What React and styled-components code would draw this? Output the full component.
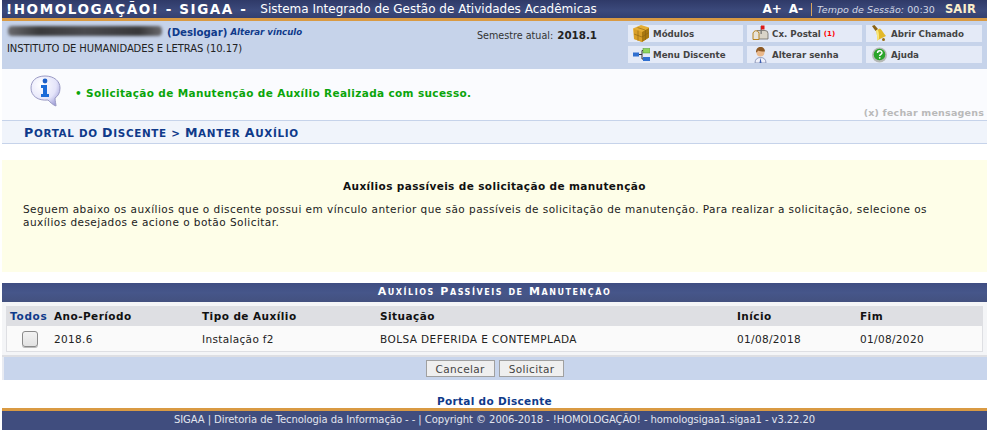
import React from "react";
import styled, { createGlobalStyle } from "styled-components";

const Global = createGlobalStyle`
  html, body { margin: 0; padding: 0; background: #fff; overflow: hidden; }
  body { font-family: "DejaVu Sans", Verdana, sans-serif; font-size: 11px; color: #222; }
`;
const Page = styled.div`
  width: 985px; height: 430px; margin-left: 2px; display: flex; flex-direction: column;
`;
const TopBar = styled.header`
  height: 18px; flex: none; display: flex; align-items: center; color: #fff;
  background: linear-gradient(#2f3a68, #3c4a7c 60%, #34406f);
  border-bottom: 3px solid #d99a43; padding-left: 4px;
`;
const SystemName = styled.strong`
  font-size: 13.5px; letter-spacing: 1.58px; font-weight: 700; white-space: nowrap;
`;
const SystemDesc = styled.span`
  margin-left: 13px; font-size: 12px; letter-spacing: 0; white-space: nowrap;
`;
const TopRight = styled.div`
  margin-left: auto; display: flex; align-items: center; height: 18px; white-space: nowrap;
`;
const FontSize = styled.b`
  font-size: 12px; color: #fff; margin-left: 7px;
`;
const Session = styled.span`
  font-size: 9.5px; color: #d4d8e4; border-left: 1px solid #d9a55c; margin-left: 8px; padding-left: 5px;
  line-height: 13px; letter-spacing: 0.06px;
  i { font-style: italic; }
`;
const Sair = styled.b`
  font-size: 11.5px; color: #fbeecb; margin-left: 10px; margin-right: 11px; letter-spacing: 0.2px;
`;
const InfoBar = styled.section`
  height: 48px; flex: none; background: #c6d3ea; display: flex; position: relative;
`;
const UserCol = styled.div`
  width: 475px; padding: 4px 0 0 5px; line-height: 15px; font-size: 10px; box-sizing: border-box;
`;
const UserLine = styled.div`
  height: 15px; display: flex; align-items: center; white-space: nowrap;
`;
const Blur = styled.span`
  display: block; width: 154px; height: 10px; margin: -3px 5px 0 1px; background: linear-gradient(90deg, #6a6a6e, #3a3a3c 20%, #4a4a4e 50%, #38383a 85%, #6a6a6e);
  filter: blur(1.8px); border-radius: 4px;
`;
const Logout = styled.b`
  color: #0f3a8a; font-size: 10.2px;
`;
const Vinculo = styled.i`
  color: #0f3a8a; font-weight: 700; font-size: 8.65px; margin-left: 3px;
`;
const Institute = styled.div`
  font-size: 10px; color: #222; letter-spacing: -0.1px; margin-top: 1px; white-space: nowrap;
`;
const Semester = styled.div`
  width: 151px; padding-top: 7px; font-size: 9.6px; color: #333; white-space: nowrap; line-height: 14px;
  b { font-size: 10.3px; color: #222; margin-left: 1px; }
`;
const MenuGrid = styled.nav`
  display: grid; grid-template-columns: 115px 115px 116px; grid-auto-rows: 17px; column-gap: 4px; row-gap: 4px; padding-top: 4px;
`;
const MenuItem = styled.div`
  background: #e4eaf7; display: flex; align-items: center; padding-left: 5px; overflow: hidden;
  font-size: 8.7px; font-weight: 700; color: #444; white-space: nowrap;
  svg { flex: none; width: 17px; height: 17px; margin-right: 3px; }
  sup { color: #f00; font-size: 7px; margin-left: 3px; vertical-align: baseline; }
`;
const Messages = styled.section`
  flex: none; background: #fafbfe; border-bottom: 1px solid #c6d3ea; position: relative; display: flex; align-items: flex-start;
  padding: 6px 0 0 28px; height: 45px;
`;
const MsgIcon = styled.svg`
  width: 32px; height: 32px; flex: none;
`;
const MsgText = styled.div`
  color: #0aa50a; font-weight: 700; font-size: 10.5px; letter-spacing: 0.35px; margin: 11px 0 0 13px;
  white-space: nowrap; line-height: 14px;
`;
const Close = styled.span`
  position: absolute; right: 3px; bottom: 2px; font-size: 9.5px; font-weight: 700; color: #b9b9b9; letter-spacing: 0.2px;
`;
const Title = styled.h2`
  margin: 0; height: 22px; flex: none; background: #f0f4fb; color: #0f3a8a; font-size: 10.4px; font-weight: 700;
  display: flex; align-items: center; padding-left: 22px; text-transform: uppercase; letter-spacing: 0.68px;
  white-space: pre; border-bottom: 1px solid #c6d3ea;
`;
const TitleCap = styled.span`
  font-size: 12.6px;
`;
const Notice = styled.section`
  margin-top: 16px; height: 112px; flex: none; background: #fefee8; box-sizing: border-box; padding: 19px 21px 0;
  font-size: 10.5px; line-height: 13px; color: #222;
  h3 { margin: 0 0 10px; text-align: center; font-size: 10.5px; font-weight: 700; color: #111; line-height: 14px; letter-spacing: 0.38px; }
  p { margin: 0; letter-spacing: 0.455px; }
`;
const Form = styled.section`
  margin-top: 11px; flex: none;
`;
const Caption = styled.div`
  height: 19px; background: linear-gradient(#3f4d82, #46568a 50%, #43517f); color: #fff; font-weight: 700; text-align: center;
  font-size: 11px; font-variant: small-caps; letter-spacing: 1.55px; line-height: 18px;
`;
const FormBody = styled.div`
  background: #f4f5f7; padding: 4px 4px 3px; border-bottom: 2px solid #dedfe3;
`;
const Table = styled.table`
  width: 100%; border-collapse: separate; border-spacing: 0; table-layout: fixed; font-size: 10.5px;
  border: 1px solid #dedfe3; border-top: none; background: #fafafa;
  th { background: #dedfe3; text-align: left; font-weight: 700; color: #111; height: 20px; padding: 0 0 0 1px; letter-spacing: 0.45px; }
  td { height: 25px; padding: 0 0 0 1px; color: #222; letter-spacing: 0.34px; white-space: nowrap; }
`;
const TodosHead = styled.th`
  && { color: #0f3a8a; padding-left: 3px; letter-spacing: 0.7px; }
`;
const WideCell = styled.td`
  && { letter-spacing: 0.43px; }
`;
const Box = styled.span`
  display: block; width: 14px; height: 14px; margin: 0 0 0 14px; border: 1px solid #8a8a8a; border-radius: 3px;
  background: linear-gradient(#f2f2f2, #e2e2e2); box-shadow: 0 1px 0 #bbb;
`;
const FormFoot = styled.div`
  height: 23px; background: #c8d5ec; display: flex; justify-content: center; align-items: center; gap: 4px;
  border-left: 2px solid #e8ebf2; padding-right: 1px;
`;
const Btn = styled.button`
  height: 17px; padding: 0 9px; font: 10.5px "DejaVu Sans", sans-serif; color: #444; background: #efefef;
  border: 1px solid #a0a0a0; letter-spacing: 0.35px; border-radius: 0;
`;
const Back = styled.div`
  margin-top: auto; text-align: center; color: #0f3a8a; font-weight: 700; font-size: 10.5px; line-height: 16px; letter-spacing: 0.32px;
  height: 15px;
`;
const Footer = styled.footer`
  flex: none; height: 19px; border-top: 3px solid #d99a43; background: #404d7e; color: #e2e5ee; text-align: center;
  font-size: 10px; line-height: 18px; white-space: nowrap; letter-spacing: -0.07px;
`;

const Cube = () => (
  <svg viewBox="0 0 17 17"><path d="M0 3.500L8 0l8 2.500v10L9 17 1 14z" fill="#e5ae35" /><path d="M1 4l8 3v10l-8-3z" fill="#d99f28" /><path d="M9 7l7-4v9.500L9 17z" fill="#a9780f" /><path d="M1 9l8 3 7-4.500M4.500 2.500l7.500 2.500M5 5.500v10M12.500 5v10" stroke="#8a6212" strokeWidth=".6" fill="none" /></svg>
);
const Tree = () => (
  <svg viewBox="0 0 17 17"><path d="M6 8.500h3M9 4.500v8.500h2M9 4.500h2" stroke="#333" strokeWidth="1" fill="none" /><rect x="0" y="6.500" width="6" height="4" fill="#2f6fd0" /><rect x="10" y="2.500" width="7" height="4.500" fill="#8fd65f" stroke="#4f9a2f" strokeWidth=".5" /><rect x="10" y="11" width="7" height="4" fill="#2f6fd0" /></svg>
);
const Mail = () => (
  <svg viewBox="0 0 17 17"><path d="M5 5.500h8a3 3 0 0 1 3 3V14H5z" fill="#d9d4c8" stroke="#6d6a62" strokeWidth=".8" /><path d="M2 6.500a3 3 0 0 1 5 2V14.500H1V8z" fill="#e8e4da" stroke="#b78320" strokeWidth="1" /><rect x="8.500" y="1" width="1.300" height="8" fill="#777" /><path d="M9 .5h3.500v4H9z" fill="#dd1a1a" /></svg>
);
const Person = () => (
  <svg viewBox="0 0 17 17"><path d="M3 17c0-3.500 2-5.500 5.500-5.500S14 13.500 14 17z" fill="#eef0fa" stroke="#6f7ca8" strokeWidth=".7" /><path d="M8.500 11.500l-1 5.500h2z" fill="#3d5fb0" /><circle cx="8.500" cy="6.500" r="4" fill="#eab98c" /><path d="M4 6.500C4 2.500 6 1 8.500 1S13 2.500 13 5.500c-2 0-6 0-7-1-.5 1-1 2-2 2z" fill="#8e5a25" /></svg>
);
const Bell = () => (
  <svg viewBox="0 0 17 17"><path d="M1 1l2.500-1L7 4 4.500 6z" fill="#8a6212" /><path d="M5 5.500L9 3.500c2.500 1.500 3 4.500 6 7.500l-9 4.500c.5-4-.200-7-1-10z" fill="#e3b92a" /><path d="M7 5c1 3 1.300 6 .8 9.500l-1.800 1c.5-4-.200-7-1-10z" fill="#f8e77a" /><circle cx="12.500" cy="14.500" r="1.500" fill="#9a6e14" /></svg>
);
const Help = () => (
  <svg viewBox="0 0 17 17"><circle cx="8.500" cy="9" r="7.500" fill="#b4b8b4" /><circle cx="8.500" cy="8.500" r="5.800" fill="#2aa52a" /><path d="M6.500 7c0-3 4.500-3 4.500-.3 0 1.700-2.300 1.700-2.300 3.300" stroke="#fff" strokeWidth="1.400" fill="none" /><circle cx="8.700" cy="11.800" r=".9" fill="#fff" /></svg>
);
const InfoIcon = () => (
  <MsgIcon viewBox="0 0 32 32">
    <defs>
      <radialGradient id="bub" cx=".35" cy=".3" r=".8"><stop offset="0" stopColor="#fff" /><stop offset=".65" stopColor="#e4e4fa" /><stop offset="1" stopColor="#9f9ed8" /></radialGradient>
    </defs>
    <path d="M15 1c9 0 15 5 15 12 0 5-2 8-5 10 0 3 1 6 1 8-3-1-6-4-8-6C8 26 1 21 1 13 1 6 6 1 15 1z" fill="url(#bub)" stroke="#9a9ac4" strokeWidth="1" />
    <circle cx="15" cy="6" r="2.400" fill="#1c5fc8" />
    <path d="M11 10h6v9h2v3h-8v-3h2v-6h-2z" fill="#1c6bd8" />
  </MsgIcon>
);

export default function App() {
  return (
    <Page>
      <Global />
      <TopBar>
        <SystemName>!HOMOLOGAÇÃO! - SIGAA -</SystemName>
        <SystemDesc>Sistema Integrado de Gestão de Atividades Acadêmicas</SystemDesc>
        <TopRight>
          <FontSize>A+</FontSize>
          <FontSize>A-</FontSize>
          <Session><i>Tempo de Sessão:</i> 00:30</Session>
          <Sair>SAIR</Sair>
        </TopRight>
      </TopBar>
      <InfoBar>
        <UserCol>
          <UserLine><Blur /><Logout>(Deslogar)</Logout><Vinculo>Alterar vínculo</Vinculo></UserLine>
          <Institute>INSTITUTO DE HUMANIDADES E LETRAS (10.17)</Institute>
        </UserCol>
        <Semester>Semestre atual: <b>2018.1</b></Semester>
        <MenuGrid>
          <MenuItem><Cube />Módulos</MenuItem>
          <MenuItem><Mail />Cx. Postal<sup>(1)</sup></MenuItem>
          <MenuItem><Bell />Abrir Chamado</MenuItem>
          <MenuItem><Tree />Menu Discente</MenuItem>
          <MenuItem><Person />Alterar senha</MenuItem>
          <MenuItem><Help />Ajuda</MenuItem>
        </MenuGrid>
      </InfoBar>
      <Messages>
        <InfoIcon />
        <MsgText>• Solicitação de Manutenção de Auxílio Realizada com sucesso.</MsgText>
        <Close>(x) fechar mensagens</Close>
      </Messages>
      <Title><span><TitleCap>P</TitleCap>ortal do <TitleCap>D</TitleCap>iscente &gt; <TitleCap>M</TitleCap>anter <TitleCap>A</TitleCap>uxílio</span></Title>
      <Notice>
        <h3>Auxílios passíveis de solicitação de manutenção</h3>
        <p>Seguem abaixo os auxílios que o discente possui em vínculo anterior que são passíveis de solicitação de manutenção. Para realizar a solicitação, selecione os auxílios desejados e acione o botão Solicitar.</p>
      </Notice>
      <Form>
        <Caption>Auxílios Passíveis de Manutenção</Caption>
        <FormBody>
          <Table>
            <colgroup>
              <col style={{ width: 46 }} /><col style={{ width: 148 }} /><col style={{ width: 178 }} /><col style={{ width: 357 }} /><col style={{ width: 123 }} /><col />
            </colgroup>
            <thead>
              <tr>
                <TodosHead>Todos</TodosHead><th>Ano-Período</th><th>Tipo de Auxílio</th><th>Situação</th><th>Início</th><th>Fim</th>
              </tr>
            </thead>
            <tbody>
              <tr>
                <td><Box /></td><td>2018.6</td><td>Instalação f2</td><WideCell>BOLSA DEFERIDA E CONTEMPLADA</WideCell><td>01/08/2018</td><td>01/08/2020</td>
              </tr>
            </tbody>
          </Table>
        </FormBody>
        <FormFoot>
          <Btn>Cancelar</Btn>
          <Btn>Solicitar</Btn>
        </FormFoot>
      </Form>
      <Back>Portal do Discente</Back>
      <Footer>SIGAA | Diretoria de Tecnologia da Informação - - | Copyright © 2006-2018 - !HOMOLOGAÇÃO! - homologsigaa1.sigaa1 - v3.22.20</Footer>
    </Page>
  );
}
